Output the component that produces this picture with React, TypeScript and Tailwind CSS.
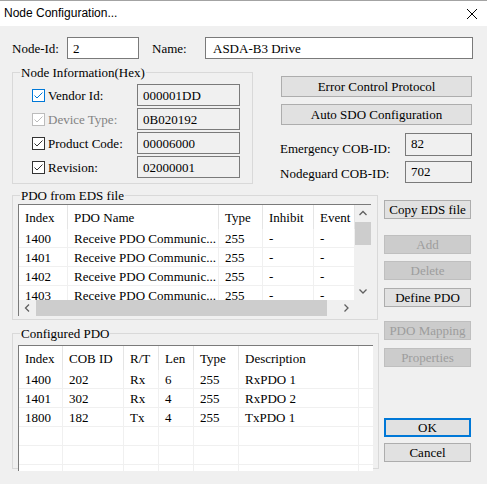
import React from 'react';

type BtnProps = { label: string; disabled?: boolean; def?: boolean; className?: string };

function Btn({ label, disabled, def, className = '' }: BtnProps) {
  const look = disabled
    ? 'border bg-[#cccccc] border-[#bfbfbf] text-[#9d9d9d]'
    : def
    ? 'border-2 bg-[#e1e1e1] border-[#0078d7] text-black'
    : 'border bg-[#e1e1e1] border-[#adadad] text-black';
  return <div className={`flex items-center justify-center whitespace-nowrap ${look} ${className}`}>{label}</div>;
}

function Check({ tone }: { tone: 'focus' | 'on' | 'off' }) {
  const c = tone === 'focus' ? '#0078d7' : tone === 'off' ? '#bcbcbc' : '#333333';
  return (
    <svg width="13" height="13" viewBox="0 0 13 13" className="shrink-0">
      <rect x="0.5" y="0.5" width="12" height="12" fill="#fff" stroke={c} />
      <path d="M2.5 6.5 L5 9 L10.5 3.5" fill="none" stroke={c} strokeWidth="1" />
    </svg>
  );
}

function Chevron({ dir }: { dir: 'up' | 'down' | 'left' | 'right' }) {
  const d = {
    up: 'M0.5 5 L4 1.5 L7.5 5',
    down: 'M0.5 1.5 L4 5 L7.5 1.5',
    left: 'M5 0.5 L1.5 4 L5 7.5',
    right: 'M1.5 0.5 L5 4 L1.5 7.5',
  }[dir];
  const vert = dir === 'up' || dir === 'down';
  return (
    <svg width={vert ? 8 : 7} height={vert ? 7 : 8} viewBox={vert ? '0 0 8 7' : '0 0 7 8'}>
      <path d={d} fill="none" stroke="#606060" strokeWidth="1.3" />
    </svg>
  );
}

const INFO = [
  { label: 'Vendor Id:', value: '000001DD', tone: 'focus' as const },
  { label: 'Device Type:', value: '0B020192', tone: 'off' as const },
  { label: 'Product Code:', value: '00006000', tone: 'on' as const },
  { label: 'Revision:', value: '02000001', tone: 'on' as const },
];

const EDS_COLS = [
  { title: 'Index', w: 'w-[49px]' },
  { title: 'PDO Name', w: 'w-[151px]' },
  { title: 'Type', w: 'w-[44px]' },
  { title: 'Inhibit', w: 'w-[51px]' },
  { title: 'Event', w: 'w-[41px]' },
];

const EDS_ROWS = ['1400', '1401', '1402', '1403'].map((idx) => [idx, 'Receive PDO Communic...', '255', '-', '-']);

const CFG_COLS = [
  { title: 'Index', w: 'w-[44px]' },
  { title: 'COB ID', w: 'w-[61px]' },
  { title: 'R/T', w: 'w-[35px]' },
  { title: 'Len', w: 'w-[35px]' },
  { title: 'Type', w: 'w-[45px]' },
  { title: 'Description', w: 'w-[120px]' },
];

const CFG_ROWS = [
  ['1400', '202', 'Rx', '6', '255', 'RxPDO 1'],
  ['1401', '302', 'Rx', '4', '255', 'RxPDO 2'],
  ['1800', '182', 'Tx', '4', '255', 'TxPDO 1'],
  ['', '', '', '', '', ''],
  ['', '', '', '', '', ''],
  ['', '', '', '', '', ''],
];

const legendCls = "px-[1px] leading-[15px] font-['Liberation_Serif','Times_New_Roman',serif] text-[13px] font-normal text-black";

export default function App() {
  return (
    <div className="w-[487px] h-[484px] overflow-hidden bg-[#f0f0f0] border-t border-[#a3a3a3] font-['Liberation_Serif','Times_New_Roman',serif] text-[13px] leading-[15px] text-black">
      {/* title bar */}
      <div className="h-[25px] bg-white flex items-center justify-between pl-[4px] pr-[10px]">
        <span className="font-['Liberation_Sans',Arial,sans-serif] text-[12px]">Node Configuration...</span>
        <svg width="10" height="10" viewBox="0 0 10 10">
          <path d="M0 0 L10 10 M10 0 L0 10" stroke="#000" strokeWidth="1" />
        </svg>
      </div>

      <div className="pl-[12px] pt-[11px]">
        {/* node id + name */}
        <div className="flex items-center h-[22px]">
          <span className="w-[55px]">Node-Id:</span>
          <div className="w-[72px] h-[22px] bg-white border border-[#7a7a7a] pl-[5px] flex items-center">2</div>
          <span className="ml-[13px] w-[53px]">Name:</span>
          <div className="w-[268px] h-[22px] bg-white border border-[#7a7a7a] pl-[7px] flex items-center">ASDA-B3 Drive</div>
        </div>

        {/* node information + protocol buttons */}
        <div className="flex items-start">
          <fieldset className="mt-[6px] w-[241px] border border-[#d9d9d9] px-[7px] pt-[4px] pb-[5px]">
            <legend className={legendCls}>Node Information(Hex)</legend>
            <div className="pl-[12px] flex flex-col gap-[2px]">
              {INFO.map((r) => (
                <div key={r.label} className="flex items-center h-[22px]">
                  <Check tone={r.tone} />
                  <span className={`ml-[3px] w-[89px] ${r.tone === 'off' ? 'text-[#838383]' : ''}`}>{r.label}</span>
                  <div className="w-[103px] h-[22px] border border-[#7a7a7a] pl-[5px] flex items-center">{r.value}</div>
                </div>
              ))}
            </div>
          </fieldset>

          <div className="ml-[28px] mt-[17px] w-[191px]">
            <Btn label="Error Control Protocol" className="h-[21px]" />
            <Btn label="Auto SDO Configuration" className="h-[21px] mt-[7px]" />
            <div className="mt-[8px] flex items-start justify-between">
              <span className="ml-[-1px] pt-[8px]">Emergency COB-ID:</span>
              <div className="w-[67px] h-[23px] border border-[#7a7a7a] pl-[5px] pt-[2px]">82</div>
            </div>
            <div className="mt-[5px] flex items-start justify-between">
              <span className="ml-[-1px] pt-[5px]">Nodeguard COB-ID:</span>
              <div className="w-[67px] h-[22px] border border-[#7a7a7a] pl-[5px] pt-[2px]">702</div>
            </div>
          </div>
        </div>

        {/* PDO groups + side buttons */}
        <div className="flex items-start">
          <div className="w-[366px]">
            <fieldset className="mt-[4px] border border-[#d9d9d9] px-[5px] pt-[1px] pb-[3px]">
              <legend className={`ml-[2px] ${legendCls}`}>PDO from EDS file</legend>
              <div className="w-[353px] h-[112px] bg-white border-l border-t border-[#7a7a7a] flex flex-col">
                <div className="flex h-[95px]">
                  <div className="w-[336px] overflow-hidden">
                    <div className="flex h-[24px]">
                      {EDS_COLS.map((c) => (
                        <div key={c.title} className={`${c.w} shrink-0 pl-[6px] flex items-center border-r border-[#e5e5e5] whitespace-nowrap`}>{c.title}</div>
                      ))}
                    </div>
                    {EDS_ROWS.map((row) => (
                      <div key={row[0]} className="flex h-[19px] border-b border-[#f0f0f0]">
                        {row.map((v, i) => (
                          <div key={i} className={`${EDS_COLS[i].w} shrink-0 pl-[6px] flex items-center border-r border-[#f0f0f0] whitespace-nowrap overflow-hidden`}>{v}</div>
                        ))}
                      </div>
                    ))}
                  </div>
                  <div className="w-[16px] bg-[#f0f0f0] flex flex-col">
                    <div className="h-[17px] flex items-center justify-center"><Chevron dir="up" /></div>
                    <div className="h-[23px] bg-[#cdcdcd]" />
                    <div className="flex-1" />
                    <div className="h-[17px] flex items-center justify-center"><Chevron dir="down" /></div>
                  </div>
                </div>
                <div className="flex h-[16px] bg-[#f0f0f0]">
                  <div className="w-[17px] flex items-center justify-center"><Chevron dir="left" /></div>
                  <div className="w-[291px] bg-[#cdcdcd]" />
                  <div className="flex-1" />
                  <div className="w-[17px] flex items-center justify-center"><Chevron dir="right" /></div>
                  <div className="w-[16px]" />
                </div>
              </div>
            </fieldset>

            <fieldset className="mt-[6px] border border-[#d9d9d9] px-[5px] pt-[4px]">
              <legend className={`ml-[2px] ${legendCls}`}>Configured PDO</legend>
              <div className="w-[355px] h-[126px] mb-[-3px] bg-white border-l border-t border-[#7a7a7a] overflow-hidden">
                <div className="flex h-[24px]">
                  {CFG_COLS.map((c) => (
                    <div key={c.title} className={`${c.w} shrink-0 pl-[6px] flex items-center border-r border-[#e5e5e5] whitespace-nowrap`}>{c.title}</div>
                  ))}
                  <div className="flex-1" />
                </div>
                {CFG_ROWS.map((row, r) => (
                  <div key={r} className="flex h-[19px] border-b border-[#f0f0f0]">
                    {row.map((v, i) => (
                      <div key={i} className={`${CFG_COLS[i].w} shrink-0 pl-[6px] flex items-center border-r border-[#f0f0f0] whitespace-nowrap`}>{v}</div>
                    ))}
                    <div className="flex-1" />
                  </div>
                ))}
              </div>
            </fieldset>
          </div>

          <div className="ml-[6px] mt-[16px] w-[87px] flex flex-col">
            <Btn label="Copy EDS file" className="h-[19px]" />
            <Btn label="Add" disabled className="h-[19px] mt-[16px]" />
            <Btn label="Delete" disabled className="h-[19px] mt-[7px]" />
            <Btn label="Define PDO" className="h-[19px] mt-[8px]" />
            <Btn label="PDO Mapping" disabled className="h-[19px] mt-[14px]" />
            <Btn label="Properties" disabled className="h-[19px] mt-[8px]" />
            <Btn label="OK" def className="h-[19px] mt-[51px]" />
            <Btn label="Cancel" className="h-[19px] mt-[6px]" />
          </div>
        </div>
      </div>
    </div>
  );
}
